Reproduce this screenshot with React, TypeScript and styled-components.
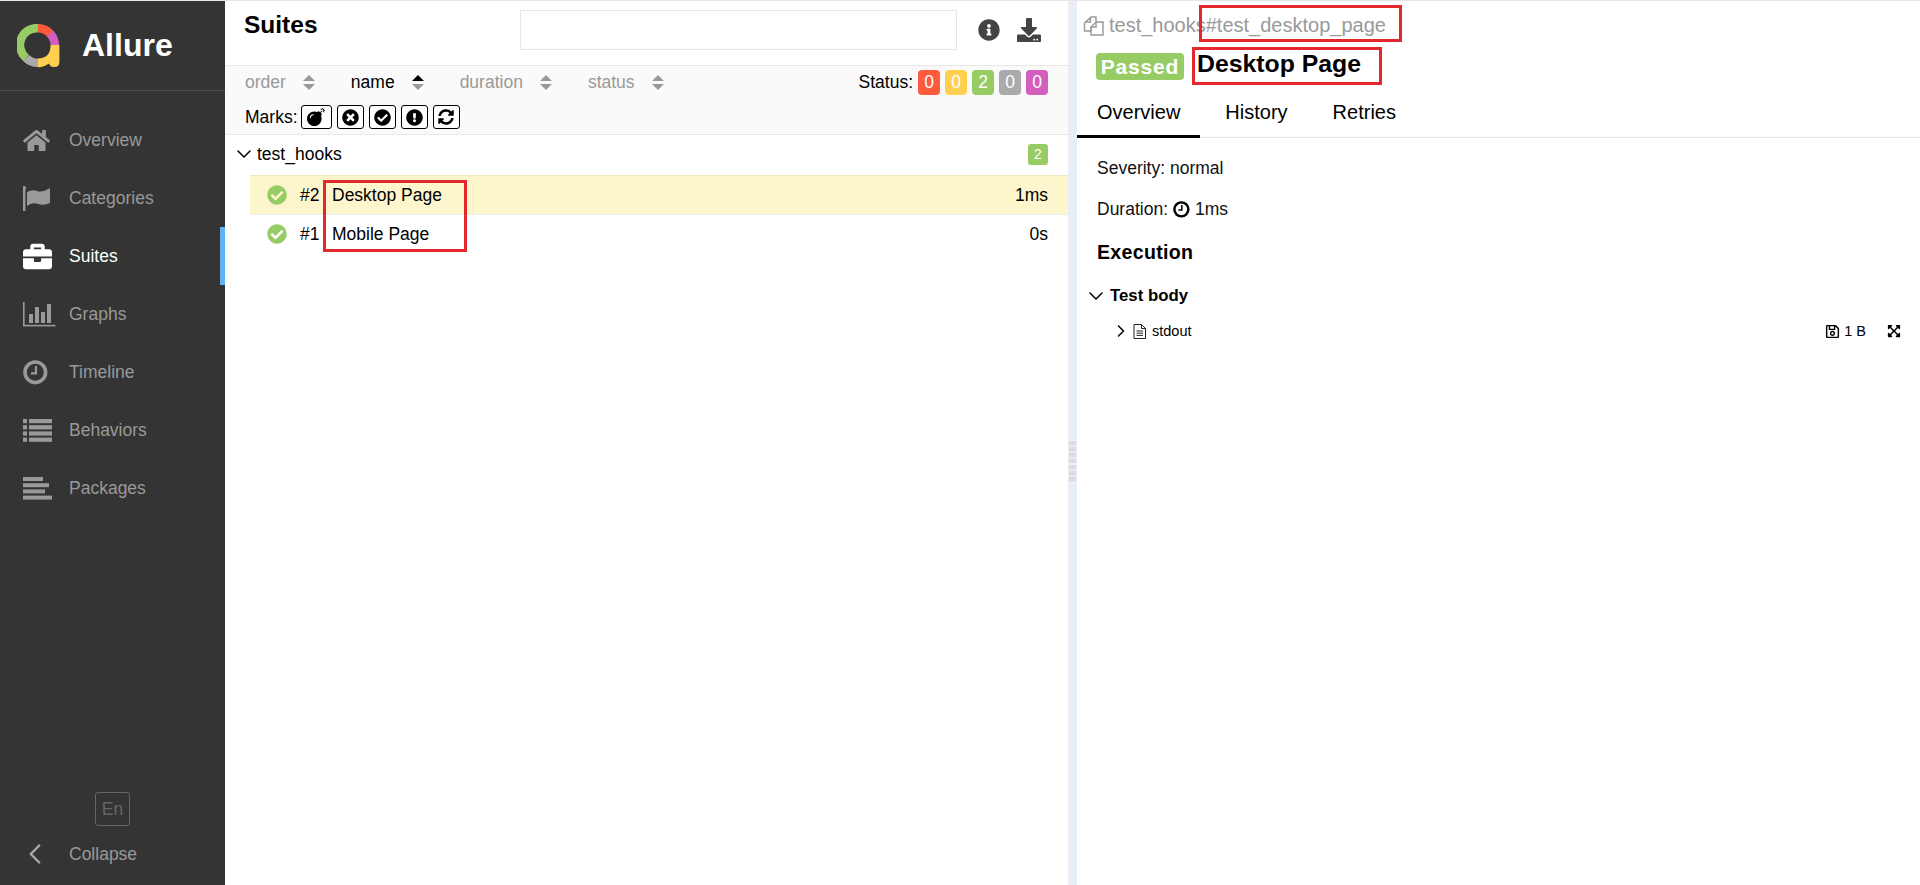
import React from "react";
import styled, { createGlobalStyle } from "styled-components";
import {
  FaBomb, FaTimesCircle, FaCheckCircle, FaExclamationCircle, FaSyncAlt, FaInfoCircle, FaDownload,
  FaRegSave, FaExpandArrowsAlt, FaHome, FaBriefcase,
} from "react-icons/fa";
import { ChevronDown, ChevronRight, ChevronLeft } from "lucide-react";

const Global = createGlobalStyle`
  html, body { margin: 0; padding: 0; height: 100%; background: #fff; overflow: hidden; }
  body { font-family: "Liberation Sans", Arial, sans-serif; color: #000; }
  #root { height: 100%; }
  * { box-sizing: border-box; }
`;

const Page = styled.div`
  display: flex;
  height: 885px;
  border-top: 1px solid #e6e6e6;
`;

const Sidebar = styled.aside`
  width: 225px;
  flex: none;
  background: #343434;
  display: flex;
  flex-direction: column;
`;

const Brand = styled.div`
  height: 90px;
  flex: none;
  display: flex;
  align-items: center;
  padding-left: 17px;
  gap: 21px;
  border-bottom: 1px solid #4d4d4d;
`;

const BrandName = styled.span`
  color: #fff;
  font-size: 32px;
  font-weight: 700;
`;

const Nav = styled.nav`
  padding-top: 20px;
`;

const NavItem = styled.div<{ $active?: boolean }>`
  height: 58px;
  display: flex;
  align-items: center;
  padding-left: 23px;
  font-size: 17.5px;
  color: ${(p) => (p.$active ? "#fff" : "#999")};
  border-right: 5px solid ${(p) => (p.$active ? "#5eb3f6" : "transparent")};
`;

const NavIcon = styled.span`
  width: 46px;
  flex: none;
  display: flex;
  align-items: center;
`;

const SideFooter = styled.div`
  margin-top: auto;
  display: flex;
  flex-direction: column;
  padding-bottom: 2px;
`;

const Lang = styled.div`
  width: 35px;
  height: 34px;
  margin-left: 95px;
  border: 1px solid #666;
  border-radius: 3px;
  color: #666;
  font-size: 17.5px;
  display: flex;
  align-items: center;
  justify-content: center;
`;

const Collapse = styled.div`
  height: 58px;
  margin-top: -1px;
  display: flex;
  align-items: center;
  padding-left: 18px;
  gap: 17px;
  font-size: 17.5px;
  color: #999;
`;

const ListPane = styled.section`
  width: 843px;
  flex: none;
  display: flex;
  flex-direction: column;
`;

const ListHead = styled.header`
  height: 64px;
  flex: none;
  display: flex;
  align-items: flex-start;
  padding: 9px 0 0 19px;
`;

const ListTitle = styled.h2`
  margin: 1px 0 0;
  font-size: 24.5px;
  line-height: 28px;
  font-weight: 700;
  width: 276px;
`;

const Search = styled.div`
  width: 437px;
  height: 40px;
  border: 1px solid #e5e5e5;
`;

const HeadIcons = styled.div`
  display: flex;
  align-items: center;
  height: 40px;
  margin-left: 21px;
  gap: 17px;
  color: #444;
`;

const Toolbar = styled.div`
  height: 70px;
  flex: none;
  background: #fafafa;
  border-top: 1px solid #e8e8e8;
  border-bottom: 1px solid #e8e8e8;
  padding: 0 20px;
  font-size: 17.5px;
`;

const ToolRow = styled.div`
  display: flex;
  align-items: center;
  height: 32px;
`;

const SortGroup = styled.div`
  display: flex;
  align-items: center;
  gap: 36px;
`;

const SortItem = styled.div<{ $active?: boolean }>`
  display: flex;
  align-items: center;
  gap: 17px;
  color: ${(p) => (p.$active ? "#000" : "#999")};
`;

const StatusGroup = styled.div`
  margin-left: auto;
  display: flex;
  align-items: center;
  gap: 5px;
`;

const StatusBadge = styled.span<{ $bg: string }>`
  width: 22px;
  height: 25px;
  border-radius: 4px;
  background: ${(p) => p.$bg};
  color: #fff;
  display: flex;
  align-items: center;
  justify-content: center;
`;

const MarksRow = styled(ToolRow)`
  height: 30px;
  margin-top: 4px;
  gap: 5px;
`;

const MarkLabel = styled.span`
  margin-right: -2px;
`;

const MarkBtn = styled.span<{ $w?: number }>`
  width: ${(p) => p.$w ?? 27}px;
  height: 24px;
  border: 1px solid #000;
  border-radius: 3px;
  display: flex;
  align-items: center;
  justify-content: center;
  background: #fff;
`;

const Tree = styled.div`
  position: relative;
  flex: 1;
  font-size: 17.5px;
`;

const Group = styled.div`
  height: 40px;
  display: flex;
  align-items: center;
  padding: 0 20px 2px 7px;
  gap: 1px;
`;

const CountBadge = styled.span`
  margin-left: auto;
  width: 20px;
  height: 21px;
  background: #97cc64;
  border-radius: 3px;
  color: #fff;
  font-size: 14px;
  display: flex;
  align-items: center;
  justify-content: center;
`;

const Row = styled.div<{ $selected?: boolean }>`
  height: 40px;
  margin-left: 25px;
  display: flex;
  align-items: center;
  padding: 0 20px ${(p) => (p.$selected ? 0 : 2)}px 17px;
  background: ${(p) => (p.$selected ? "#fdf6cd" : "#fff")};
  border-top: ${(p) => (p.$selected ? "1px solid #eee6bd" : "none")};
  border-bottom: ${(p) => (p.$selected ? "1px solid #eeeeee" : "none")};
`;

const Order = styled.span`
  margin-left: 13px;
  width: 32px;
  flex: none;
`;

const Duration = styled.span`
  margin-left: auto;
`;

const RedBox = styled.div<{ $x: number; $y: number; $w: number; $h: number }>`
  position: absolute;
  left: ${(p) => p.$x}px;
  top: ${(p) => p.$y}px;
  width: ${(p) => p.$w}px;
  height: ${(p) => p.$h}px;
  border: 3px solid #e2272d;
  pointer-events: none;
`;

const Gutter = styled.div`
  width: 9px;
  flex: none;
  background: #e9eef4;
  display: flex;
  flex-direction: column;
  align-items: center;
  justify-content: center;
  gap: 2px;
  padding-top: 36px;
`;

const Grip = styled.span`
  width: 7px;
  height: 4px;
  background: #d9dde2;
`;

const Detail = styled.section`
  flex: 1;
  position: relative;
  display: flex;
  flex-direction: column;
  min-width: 0;
`;

const PathLine = styled.div`
  height: 41px;
  display: flex;
  align-items: center;
  padding-left: 6px;
  gap: 5px;
  color: #999;
  font-size: 20px;
  padding-top: 8px;
`;

const TitleLine = styled.div`
  height: 37px;
  display: flex;
  align-items: center;
  padding-left: 19px;
  margin-top: 6px;
`;

const Passed = styled.span`
  width: 88px;
  height: 27px;
  border-radius: 4px;
  background: #97cc64;
  color: #fff;
  font-size: 21px;
  font-weight: 700;
  letter-spacing: 0.8px;
  display: flex;
  align-items: center;
  justify-content: center;
  flex: none;
`;

const DetailTitle = styled.h2`
  margin: -6px 0 0 13px;
  font-size: 24.8px;
  font-weight: 700;
  line-height: 30px;
`;

const Tabs = styled.div`
  display: flex;
  gap: 5px;
  height: 50px;
  margin-top: 3px;
  border-bottom: 1px solid #e5e5e5;
`;

const Tab = styled.div<{ $active?: boolean }>`
  padding: 2px 20px 0;
  height: 50px;
  display: flex;
  align-items: center;
  font-size: 20px;
  border-bottom: 3px solid ${(p) => (p.$active ? "#000" : "transparent")};
`;

const Body = styled.div`
  padding: 0 20px;
  font-size: 17.5px;
`;

const Meta = styled.div`
  height: 41px;
  display: flex;
  align-items: center;
  gap: 5px;
  color: #111;
`;

const MetaFirst = styled(Meta)`
  margin-top: 10px;
`;

const Heading = styled.h3`
  margin: 0;
  height: 44px;
  display: flex;
  align-items: center;
  font-size: 19.6px;
  font-weight: 700;
  letter-spacing: 0.3px;
`;

const StepHead = styled.div`
  height: 41px;
  margin-top: 1px;
  display: flex;
  align-items: center;
  margin-left: -13px;
  gap: 2px;
  font-size: 16.8px;
  font-weight: 700;
`;

const Attachment = styled.div`
  height: 30px;
  display: flex;
  align-items: center;
  font-size: 14.5px;
  margin-left: 14px;
  margin-right: -1px;
  gap: 2px;
`;

const AttachmentName = styled.span`
  margin-left: 4px;
`;

const AttachmentSize = styled.span`
  margin-left: auto;
  display: flex;
  align-items: center;
  gap: 4px;
`;

const Expand = styled.span`
  margin-left: 19px;
  display: flex;
`;

const Logo = () => (
  <svg width="44" height="44" viewBox="0 0 44 44" style={{ flex: "none" }}>
    <g fill="none" strokeWidth="8.5">
      <path d="M21 4.2 A16.8 16.8 0 0 0 9.1 33.9" stroke="#97cc64" />
      <path d="M9.1 33.9 A16.8 16.8 0 0 0 21 38.8" stroke="#aaaaaa" />
      <path d="M21 4.2 A16.8 16.8 0 0 1 33.5 10" stroke="#fd5a3e" />
      <path d="M33 9.5 A16.8 16.8 0 0 1 37.8 21" stroke="#d35ebe" />
    </g>
    <path d="M33.6 21 H42.4 V38 Q42.4 43.2 37 43 Q33 43 32 39.5 Q27 43.3 21 43.2 V34.6 Q33.6 34 33.6 21 Z" fill="#ffd050" />
  </svg>
);

const FlagIcon = () => (
  <svg width="28" height="25" viewBox="0 0 28 25" fill="#999">
    <rect x="0" y="2" width="2.4" height="23" />
    <circle cx="1.2" cy="1.8" r="1.8" />
    <path d="M4 6 Q9 3 14 5 T27 2 V17 Q21 20 15 18 T4 20 Z" />
  </svg>
);

const GraphIcon = () => (
  <svg width="33" height="25" viewBox="0 0 33 25" fill="#999">
    <rect x="0" y="0" width="1.6" height="24" />
    <rect x="0" y="22.8" width="32.5" height="1.6" />
    <rect x="6" y="12" width="4" height="9" />
    <rect x="12" y="5" width="4" height="16" />
    <rect x="18" y="10" width="4" height="11" />
    <rect x="24" y="2" width="4" height="19" />
  </svg>
);

const ClockIcon = ({ size = 25, color = "#999" }: { size?: number; color?: string }) => (
  <svg width={size} height={size} viewBox="0 0 25 25" fill="none" stroke={color} style={{ flex: "none" }}>
    <circle cx="12.3" cy="12.3" r="10.3" strokeWidth="3.6" />
    <path d="M13 6 V13.4 H8" strokeWidth="2.2" />
  </svg>
);

const ListIcon = () => (
  <svg width="29" height="23" viewBox="0 0 29 23" fill="#999">
    {[0, 6.2, 12.4, 18.6].map((y) => (
      <React.Fragment key={y}>
        <rect x="0" y={y} width="4" height="4.2" />
        <rect x="6" y={y} width="23" height="4.2" />
      </React.Fragment>
    ))}
  </svg>
);

const PackagesIcon = () => (
  <svg width="29" height="23" viewBox="0 0 29 23" fill="#999">
    <rect x="0" y="0" width="20" height="4" />
    <rect x="0" y="6.2" width="26" height="4" />
    <rect x="0" y="12.4" width="22" height="4" />
    <rect x="0" y="18.6" width="29" height="4" />
  </svg>
);

const SortArrows = ({ active }: { active?: boolean }) => (
  <svg width="12" height="15" viewBox="0 0 12 15" style={{ flex: "none" }}>
    <path d="M6 0 L12 6 H0 Z" fill={active ? "#000" : "#999"} />
    <path d="M6 15 L12 9 H0 Z" fill="#999" />
  </svg>
);

const CopyIcon = () => (
  <svg width="21" height="20" viewBox="0 0 21 20" fill="none" stroke="#999" strokeWidth="1.4" style={{ flex: "none" }}>
    <path d="M8 1 H13 V6 L8 11 V15 H1.5 V7 Z M7.5 1 V6 H2" />
    <path d="M13 6 H20 V19 H8 V11" />
    <path d="M13 6 V11 H8" />
  </svg>
);

const FileIcon = () => (
  <svg width="13" height="15" viewBox="0 0 13 15" fill="none" stroke="#222" strokeWidth="1" style={{ flex: "none" }}>
    <path d="M1 .5 H8.5 L12.5 4.5 V14.5 H1 Z M8.5 .5 V4.5 H12.5" />
    <path d="M3.5 7 H10 M3.5 9.2 H10 M3.5 11.4 H10" />
  </svg>
);

const navItems = [
  { label: "Overview", icon: <FaHome size={27} color="#999" /> },
  { label: "Categories", icon: <FlagIcon /> },
  { label: "Suites", icon: <FaBriefcase size={29} color="#fff" />, active: true },
  { label: "Graphs", icon: <GraphIcon /> },
  { label: "Timeline", icon: <ClockIcon /> },
  { label: "Behaviors", icon: <ListIcon /> },
  { label: "Packages", icon: <PackagesIcon /> },
];

const sorters = [
  { label: "order" },
  { label: "name", active: true },
  { label: "duration" },
  { label: "status" },
];

const statuses = [
  { bg: "#fd5a3e", n: 0 },
  { bg: "#ffd050", n: 0 },
  { bg: "#97cc64", n: 2 },
  { bg: "#aaaaaa", n: 0 },
  { bg: "#d35ebe", n: 0 },
];

const tests = [
  { order: "#2", name: "Desktop Page", time: "1ms", selected: true },
  { order: "#1", name: "Mobile Page", time: "0s" },
];

export default function App() {
  return (
    <Page>
      <Global />
      <Sidebar>
        <Brand>
          <Logo />
          <BrandName>Allure</BrandName>
        </Brand>
        <Nav>
          {navItems.map((n) => (
            <NavItem key={n.label} $active={n.active}>
              <NavIcon>{n.icon}</NavIcon>
              {n.label}
            </NavItem>
          ))}
        </Nav>
        <SideFooter>
          <Lang>En</Lang>
          <Collapse>
            <ChevronLeft size={34} strokeWidth={1.7} color="#aaa" />
            Collapse
          </Collapse>
        </SideFooter>
      </Sidebar>

      <ListPane>
        <ListHead>
          <ListTitle>Suites</ListTitle>
          <Search />
          <HeadIcons>
            <FaInfoCircle size={22} />
            <FaDownload size={24} />
          </HeadIcons>
        </ListHead>
        <Toolbar>
          <ToolRow>
            <SortGroup>
              {sorters.map((s) => (
                <SortItem key={s.label} $active={s.active}>
                  {s.label}
                  <SortArrows active={s.active} />
                </SortItem>
              ))}
            </SortGroup>
            <StatusGroup>
              Status:
              {statuses.map((s, i) => (
                <StatusBadge key={i} $bg={s.bg}>{s.n}</StatusBadge>
              ))}
            </StatusGroup>
          </ToolRow>
          <MarksRow>
            <MarkLabel>Marks:</MarkLabel>
            <MarkBtn $w={31}><FaBomb size={18} /></MarkBtn>
            <MarkBtn><FaTimesCircle size={17} /></MarkBtn>
            <MarkBtn><FaCheckCircle size={17} /></MarkBtn>
            <MarkBtn><FaExclamationCircle size={17} /></MarkBtn>
            <MarkBtn><FaSyncAlt size={16} /></MarkBtn>
          </MarksRow>
        </Toolbar>
        <Tree>
          <Group>
            <ChevronDown size={24} strokeWidth={1.5} />
            test_hooks
            <CountBadge>2</CountBadge>
          </Group>
          {tests.map((t) => (
            <Row key={t.order} $selected={t.selected}>
              <FaCheckCircle size={20} color="#97cc64" />
              <Order>{t.order}</Order>
              {t.name}
              <Duration>{t.time}</Duration>
            </Row>
          ))}
          <RedBox $x={98} $y={45} $w={144} $h={72} />
        </Tree>
      </ListPane>

      <Gutter>
        {[0, 1, 2, 3, 4, 5, 6].map((i) => (
          <Grip key={i} />
        ))}
      </Gutter>

      <Detail>
        <PathLine>
          <CopyIcon />
          test_hooks#test_desktop_page
        </PathLine>
        <TitleLine>
          <Passed>Passed</Passed>
          <DetailTitle>Desktop Page</DetailTitle>
        </TitleLine>
        <Tabs>
          <Tab $active>Overview</Tab>
          <Tab>History</Tab>
          <Tab>Retries</Tab>
        </Tabs>
        <Body>
          <MetaFirst>Severity: normal</MetaFirst>
          <Meta>
            Duration: <ClockIcon size={17} color="#000" /> 1ms
          </Meta>
          <Heading>Execution</Heading>
          <StepHead>
            <ChevronDown size={24} strokeWidth={1.5} />
            Test body
          </StepHead>
          <Attachment>
            <ChevronRight size={20} strokeWidth={1.8} />
            <FileIcon />
            <AttachmentName>stdout</AttachmentName>
            <AttachmentSize>
              <FaRegSave size={15} />1 B
            </AttachmentSize>
            <Expand><FaExpandArrowsAlt size={14} /></Expand>
          </Attachment>
        </Body>
        <RedBox $x={122} $y={4} $w={203} $h={37} />
        <RedBox $x={115} $y={46} $w={190} $h={38} />
      </Detail>
    </Page>
  );
}
